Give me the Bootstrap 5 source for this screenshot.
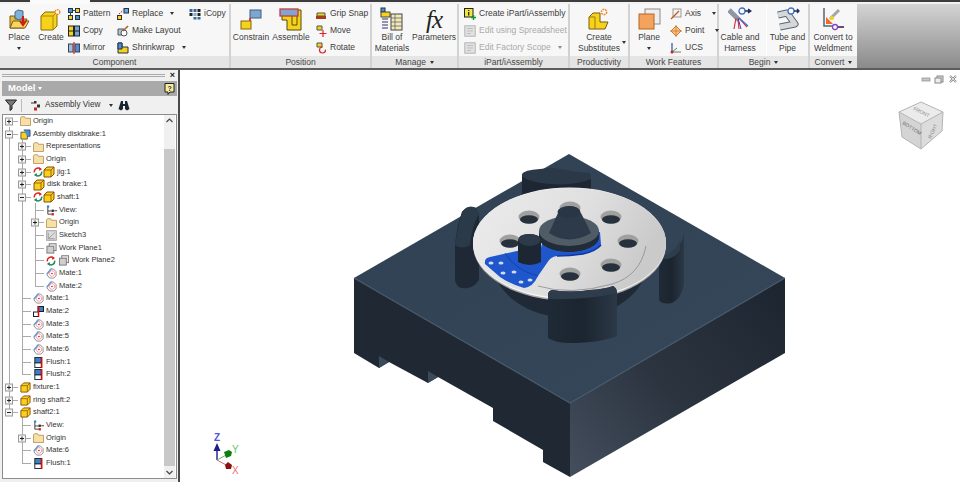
<!DOCTYPE html>
<html lang="en">
<head>
<meta charset="UTF-8">
<title>Assembly diskbrake</title>
<link href="https://cdn.jsdelivr.net/npm/bootstrap@5.3.3/dist/css/bootstrap.min.css" rel="stylesheet">
<style>
  html, body { height: 482px; overflow: hidden; background: #fff; }
  body { font-family: "Liberation Sans", Arial, sans-serif; color: #3c3c3c; width: 960px; }
  svg { display: block; flex: none; }

  /* ribbon */
  .top-strip { height: 4px; background: linear-gradient(#3d3d3d 0, #3d3d3d 2.5px, #f2f2f2 2.5px); }
  .top-tab { width: 60px; margin-left: 30px; height: 4px; background: #fafafa; }
  .rb { height: 66px; border-bottom: 2px solid #5c5c5c; background: linear-gradient(#d4d4d4, #8a8a8a); }
  .rb-panel { border-right: 2px solid #d2d2d2; background: #f7f7f7; flex: none; }
  .rb-body { height: 52px; }
  .rb-title { height: 12px; line-height: 12px; font-size: 8.5px; background: #e5e5e5; color: #444; gap: 4px; }
  .big-btn { padding-top: 3px; font-size: 8.5px; line-height: 11px; flex: none; }
  .big-ico { height: 25px; }
  .sm-col { padding-top: 1px; font-size: 8.5px; flex: none; }
  .sm-row { height: 17px; gap: 3px; white-space: nowrap; }
  .car { width: 0; height: 0; border-left: 2.5px solid transparent; border-right: 2.5px solid transparent; border-top: 3px solid #333; flex: none; }
  .car-float { position: absolute; right: 2px; top: 37px; }
  .dis { color: #aaa; }
  .fx-txt { font-family: "Liberation Serif", serif; font-style: italic; font-size: 25px; line-height: 25px; color: #222; letter-spacing: -1px; }
  .w-231 { width: 231px; } .w-141 { width: 141px; } .w-87 { width: 87px; } .w-111 { width: 111px; }
  .w-60 { width: 60px; } .w-89 { width: 89px; } .w-91 { width: 91px; } .w-47 { width: 47px; }

  /* left browser */
  .main-area { height: 412px; }
  .side { width: 180px; background: #f0f0f0; border-right: 2px solid #4a4a4a; flex: none; padding: 0 1px 0 2px; }
  .grip { height: 11px; gap: 3px; font-size: 9px; line-height: 9px; }
  .grip-lines { height: 3px; border-top: 1px solid #aaa; border-bottom: 1px solid #aaa; flex: 1 1 auto; }
  .grip-x { font-weight: 700; color: #222; width: 9px; text-align: center; }
  .model-head { height: 15px; background: #a9a9a9; color: #fff; font-weight: 700; font-size: 9.5px; padding: 0 2px 0 6px; gap: 3px; }
  .model-head .car { border-top-color: #fff; }
  .tool-row { height: 18px; font-size: 8.2px; color: #333; padding-left: 3px; }
  .tool-sep { width: 1px; height: 13px; background: #bbb; margin: 0 9px 0 4px; }
  .tree { height: 365px; border: 1px solid #8c8c8c; background: #fff; position: relative; }
  .tree-lines { position: absolute; left: 0; top: 0; }
  .tree-rows { position: relative; flex: 1 1 auto; padding-left: 0; }
  .t-row { height: 12.68px; font-size: 7.5px; line-height: 12.68px; white-space: nowrap; color: #333; }
  .lv1 { padding-left: 13px; }
  .lv2 { padding-left: 26px; }
  .t-slot { width: 17px; flex: none; }
  .t-ico { margin-right: 2px; }
  .sbar { width: 11px; background: #f0f0f0; flex: none; margin-right: 1px; }
  .sbar-arrow { height: 12px; font-size: 7px; color: #444; }
  .sbar-gap { height: 22px; }
  .sbar-thumb { height: 318px; background: #c8c8c8; }

  /* graphics window */
  .canvas { position: relative; flex: 1 1 auto; background: #fff; overflow: hidden; }
  .canvas > svg { width: 780px; height: 412px; }
</style>
</head>
<body>

<svg width="0" height="0" style="position:absolute">
  <defs>
    <symbol id="folder" viewBox="0 0 12 11"><path d="M.5 2.5V10.5H11.5V2.5H6L5 .8H1.5L.5 2z" fill="#f6dfa8" stroke="#a8843c" stroke-width=".8"/></symbol>
    <symbol id="cube" viewBox="0 0 12 12"><path d="M1 4 4 1H11V8L8 11H1z" fill="#f7d21c" stroke="#8a4a08"/><path d="M1 4H8V11M8 4 11 1" fill="none" stroke="#8a4a08" stroke-width=".8"/></symbol>
    <symbol id="mate" viewBox="0 0 12 12"><path d="M1 7.5 4 11H8.5L11 8.5V4L8 1H5z" fill="#fff" stroke="#556" stroke-width=".7"/><path d="M.8 6.5 6 .8" stroke="#5aa0dc" stroke-width="1.4"/><circle cx="6.5" cy="6" r="3" fill="none" stroke="#e33" stroke-width=".8" stroke-dasharray="1.2 .8"/><circle cx="6.5" cy="6" r=".9" fill="#e00"/></symbol>
    <symbol id="flush" viewBox="0 0 12 12"><rect x="2" y=".5" width="7" height="6" fill="#3b7fc4" stroke="#123"/><rect x="2" y="6.5" width="7" height="5" fill="#fff" stroke="#123"/><path d="M9.5 0V12" stroke="#e00" stroke-width="1.6"/></symbol>
    <symbol id="sync" viewBox="0 0 11 11"><path d="M1.5 6A4 4 0 0 1 8 2.2" fill="none" stroke="#e02222" stroke-width="1.6"/><path d="M6.5 .3 10 2.2 7 4.5z" fill="#e02222"/><path d="M9.5 5A4 4 0 0 1 3 8.8" fill="none" stroke="#1f8a5a" stroke-width="1.6"/><path d="M4.5 10.7 1 8.8 4 6.5z" fill="#1f8a5a"/></symbol>
    <symbol id="plus" viewBox="0 0 17 9"><path d="M9.5 4.5H15" stroke="#aaa"/><rect x="2.5" y="1" width="7" height="7" fill="#f4f4f4" stroke="#999"/><path d="M4 4.5H8M6 2.5V6.5" stroke="#222"/></symbol>
    <symbol id="minus" viewBox="0 0 17 9"><path d="M9.5 4.5H15" stroke="#aaa"/><rect x="2.5" y="1" width="7" height="7" fill="#f4f4f4" stroke="#999"/><path d="M4 4.5H8" stroke="#222"/></symbol>
    <symbol id="dash" viewBox="0 0 17 9"><path d="M6 4.5H15" stroke="#aaa"/></symbol>
    <symbol id="view" viewBox="0 0 12 12"><rect x="1" y=".5" width="2.5" height="2.5" fill="#3b7fc4"/><path d="M2 3V10H6M2 6.5H6" stroke="#333" fill="none"/><rect x="6" y="5" width="2.6" height="2.6" fill="#333"/><rect x="6" y="8.8" width="2.6" height="2.6" fill="#c22"/><path d="M9 6.3H12" stroke="#333"/></symbol>
    <symbol id="wplane" viewBox="0 0 12 12"><rect x="3.5" y=".8" width="7.5" height="7.5" fill="#e8e8e8" stroke="#777"/><rect x="1" y="3.5" width="7.5" height="7.5" fill="#cfcfcf" stroke="#777"/></symbol>
    <symbol id="sketch" viewBox="0 0 12 12"><rect x=".8" y=".8" width="10.4" height="10.4" fill="#ddd" stroke="#999"/><path d="M2.5 9.5 9.5 3M2.5 3V9.5H9.5" fill="none" stroke="#999"/></symbol>
    <symbol id="ybox" viewBox="0 0 12 12"><path d="M1 3.5H8V11H1z" fill="#f7d21c" stroke="#333" stroke-width=".8"/><path d="M4 1H11V8H8" fill="#4f8fd0" stroke="#1b3a66" stroke-width=".8"/></symbol>
    <symbol id="grayico" viewBox="0 0 12 12"><rect x=".8" y=".8" width="10.4" height="10.4" fill="#e2e2e2" stroke="#b5b5b5"/><path d="M3 3.5H9M3 6H9M3 8.5H7" stroke="#bdbdbd"/></symbol>
  </defs>
</svg>

<div class="top-strip"><div class="top-tab"></div></div>

<!-- ribbon -->
<div class="rb d-flex">
  <div class="rb-panel w-231">
    <div class="rb-body d-flex">
      <div class="big-btn d-flex flex-column align-items-center" style="width:38px">
        <div class="big-ico"><svg width="24" height="24" viewBox="0 0 24 24"><path d="M3 21V9H8V12H20L17 21z" fill="#e7bb3d" stroke="#7a5a14"/><path d="M3 21 6 14H22L18 21z" fill="#f6d662" stroke="#7a5a14"/><path d="M8 5 11 3 16 4V11L12 13 8 11z" fill="#7fb2d8" stroke="#3e6c92"/><path d="M16 9V16M13 14 16 18 19 14" fill="none" stroke="#d01818" stroke-width="2"/></svg></div>
        <span>Place</span><span class="car mt-1"></span>
      </div>
      <div class="big-btn d-flex flex-column align-items-center" style="width:26px">
        <div class="big-ico"><svg width="24" height="24" viewBox="0 0 24 24"><path d="M2 9 6 5H18V19L14 23H2z" fill="#f6d21a" stroke="#8a6a08"/><path d="M2 9H14V23" fill="none" stroke="#a88a10"/><path d="M14 9 18 5" stroke="#a88a10"/><circle cx="18.5" cy="5" r="2.3" fill="#fff" stroke="#ef8a2c" stroke-width="1.5" stroke-dasharray="1.6 .7"/></svg></div>
        <span>Create</span>
      </div>
      <div class="sm-col ms-1" style="width:49px">
        <div class="sm-row d-flex align-items-center"><svg width="12" height="12" viewBox="0 0 12 12"><rect x=".5" y=".5" width="4" height="4" fill="#4f8fd0" stroke="#234"/><rect x="7.5" y=".5" width="4" height="4" fill="#f6d21a" stroke="#234"/><rect x=".5" y="7.5" width="4" height="4" fill="#f6d21a" stroke="#234"/><rect x="7.5" y="7.5" width="4" height="4" fill="#4f8fd0" stroke="#234"/><path d="M4.5 2.500H7.500M2.500 4.500V7.500" stroke="#345"/></svg>Pattern</div>
        <div class="sm-row d-flex align-items-center"><svg width="12" height="12" viewBox="0 0 12 12"><rect x=".5" y="1" width="5" height="10" fill="#f6d21a" stroke="#222"/><rect x="6.500" y="1" width="5" height="10" fill="#6ea5dc" stroke="#222"/><path d="M1 6H5M7 6H11" stroke="#222"/></svg>Copy</div>
        <div class="sm-row d-flex align-items-center"><svg width="12" height="12" viewBox="0 0 12 12"><rect x=".5" y="2" width="4.500" height="8" fill="#9bbfe0" stroke="#345"/><rect x="7" y="2" width="4.500" height="8" fill="#4f8fd0" stroke="#345"/><path d="M6 0V12" stroke="#d81818" stroke-width="1.200"/></svg>Mirror</div>
      </div>
      <div class="sm-col" style="width:72px">
        <div class="sm-row d-flex align-items-center"><svg width="12" height="12" viewBox="0 0 12 12"><rect x=".5" y="7.500" width="4" height="4" fill="#f6d21a" stroke="#333"/><rect x="7" y=".5" width="4.500" height="4.500" fill="#6ea5dc" stroke="#234"/><path d="M2 6 6.500 2" stroke="#d81818" stroke-dasharray="1.500 1"/></svg>Replace <span class="car ms-1"></span></div>
        <div class="sm-row d-flex align-items-center"><svg width="12" height="12" viewBox="0 0 12 12"><path d="M1 4H7V10H1z" fill="#b9c4cc" stroke="#456"/><circle cx="7" cy="8" r="3" fill="#fff" stroke="#555"/><path d="M6 6 11 1" stroke="#a8682a" stroke-width="1.600"/></svg>Make Layout</div>
        <div class="sm-row d-flex align-items-center"><svg width="12" height="12" viewBox="0 0 12 12"><path d="M1 1H5V5H11V11H1z" fill="#f6d21a" stroke="#234"/><path d="M1 1H5V7H1z" fill="#4f8fd0" stroke="#234"/></svg>Shrinkwrap <span class="car ms-1"></span></div>
      </div>
      <div class="sm-col">
        <div class="sm-row d-flex align-items-center"><svg width="12" height="12" viewBox="0 0 12 12"><rect x=".5" y="1" width="3" height="3" fill="#37699c"/><rect x="4.500" y="1" width="3" height="3" fill="#37699c"/><rect x="8.500" y="1" width="3" height="3" fill="#222"/><rect x=".5" y="5" width="3" height="3" fill="#222"/><rect x="4.500" y="5" width="3" height="3" fill="#88aacc"/><rect x="8.500" y="5" width="3" height="3" fill="#222"/><rect x="4.500" y="9" width="3" height="2.500" fill="#37699c"/><rect x="8.500" y="9" width="3" height="2.500" fill="#37699c"/></svg>iCopy</div>
      </div>
    </div>
    <div class="rb-title d-flex justify-content-center">Component</div>
  </div>

  <div class="rb-panel w-141">
    <div class="rb-body d-flex">
      <div class="big-btn d-flex flex-column align-items-center" style="width:40px">
        <div class="big-ico"><svg width="24" height="24" viewBox="0 0 24 24"><rect x="11" y="3" width="11" height="8" fill="#7da7d0" stroke="#3e5f80"/><rect x="2" y="14" width="10" height="8" fill="#f6d21a" stroke="#7a6a10"/><path d="M11 11V14" stroke="#e33" stroke-width="2"/></svg></div>
        <span>Constrain</span>
      </div>
      <div class="big-btn d-flex flex-column align-items-center" style="width:40px">
        <div class="big-ico"><svg width="24" height="24" viewBox="0 0 24 24"><path d="M3 3H22V23H8V13H3z" fill="#f6d21a" stroke="#554a08"/><path d="M13 8H18V18H13z" fill="#f6d21a" stroke="#554a08"/><rect x="1" y="2" width="18" height="7" fill="#7da7d0" stroke="#cc3a3a" stroke-width="1.300"/></svg></div>
        <span>Assemble</span>
      </div>
      <div class="sm-col ms-1">
        <div class="sm-row d-flex align-items-center"><svg width="12" height="12" viewBox="0 0 12 12"><path d="M2 5H10V8H2z" fill="#f6d21a" stroke="#555"/><path d="M1 8H11V11H1z" fill="#a04020"/></svg>Grip Snap</div>
        <div class="sm-row d-flex align-items-center"><svg width="12" height="12" viewBox="0 0 12 12"><path d="M2 1H7V5H2z" fill="#f6d21a" stroke="#555"/><path d="M8 5V12M4.500 8.500H11.500" stroke="#e02222" stroke-width="1.200"/></svg>Move</div>
        <div class="sm-row d-flex align-items-center"><svg width="12" height="12" viewBox="0 0 12 12"><path d="M2 1H7V5H2z" fill="#f6d21a" stroke="#555"/><circle cx="7.500" cy="8" r="3" fill="none" stroke="#e02222" stroke-width="1.200" stroke-dasharray="14 4"/></svg>Rotate</div>
      </div>
    </div>
    <div class="rb-title d-flex justify-content-center">Position</div>
  </div>

  <div class="rb-panel w-87">
    <div class="rb-body d-flex">
      <div class="big-btn d-flex flex-column align-items-center" style="width:40px">
        <div class="big-ico"><svg width="24" height="24" viewBox="0 0 24 24"><rect x="1" y="1" width="4" height="4" fill="#4f8fd0" stroke="#234"/><rect x="1" y="5" width="9" height="5" fill="#f6d21a" stroke="#444"/><rect x="11" y="7" width="11" height="16" fill="#f3e8b8" stroke="#444"/><path d="M11 11H22M11 15H22M11 19H22M15 7V23" stroke="#666" stroke-width=".8"/><path d="M2 12H8M2 15H8M2 18H8M2 21H8" stroke="#336" stroke-width="1.200"/></svg></div>
        <span>Bill of</span><span>Materials</span>
      </div>
      <div class="big-btn d-flex flex-column align-items-center" style="width:44px">
        <div class="big-ico fx-txt">fx</div>
        <span>Parameters</span>
      </div>
    </div>
    <div class="rb-title d-flex justify-content-center align-items-center">Manage <span class="car"></span></div>
  </div>

  <div class="rb-panel w-111">
    <div class="rb-body d-flex">
      <div class="sm-col" style="margin-left:5px">
        <div class="sm-row d-flex align-items-center"><svg width="12" height="12" viewBox="0 0 12 12"><rect x=".5" y=".5" width="8.500" height="8.500" fill="#f0e63c" stroke="#222"/><path d="M4.700 2V3M4.700 4V7.500" stroke="#222" stroke-width="1.300"/><path d="M9.500 7V12M7 9.500H12" stroke="#129a2c" stroke-width="1.500"/></svg>Create iPart/iAssembly</div>
        <div class="sm-row d-flex align-items-center dis"><svg width="12" height="12"><use href="#grayico"/></svg>Edit using Spreadsheet</div>
        <div class="sm-row d-flex align-items-center dis"><svg width="12" height="12"><use href="#grayico"/></svg>Edit Factory Scope <span class="car ms-1" style="border-top-color:#888"></span></div>
      </div>
    </div>
    <div class="rb-title d-flex justify-content-center">iPart/iAssembly</div>
  </div>

  <div class="rb-panel w-60">
    <div class="rb-body d-flex">
      <div class="big-btn d-flex flex-column align-items-center position-relative" style="width:58px">
        <div class="big-ico"><svg width="24" height="24" viewBox="0 0 24 24"><path d="M2 10 6 6H13V15H21L18 22H2z" fill="#f6d21a" stroke="#7a5a14"/><path d="M2 10H8V22" fill="none" stroke="#9a7a18"/><circle cx="17" cy="5" r="2.600" fill="#fff" stroke="#ef8a2c" stroke-width="1.600" stroke-dasharray="1.800 .8"/></svg></div>
        <span>Create</span><span>Substitutes</span>
        <span class="car car-float"></span>
      </div>
    </div>
    <div class="rb-title d-flex justify-content-center">Productivity</div>
  </div>

  <div class="rb-panel w-89">
    <div class="rb-body d-flex">
      <div class="big-btn d-flex flex-column align-items-center" style="width:38px">
        <div class="big-ico"><svg width="24" height="24" viewBox="0 0 24 24"><rect x="8" y="2" width="15" height="15" fill="#eee" stroke="#8c8c8c"/><rect x="2" y="7" width="15" height="15" fill="#f4a35c" stroke="#b8651e"/></svg></div>
        <span>Plane</span><span class="car mt-1"></span>
      </div>
      <div class="sm-col" style="margin-left:2px">
        <div class="sm-row d-flex align-items-center"><svg width="12" height="12" viewBox="0 0 12 12"><rect x="3" y="1" width="8" height="8" fill="#f3f3f3" stroke="#999"/><path d="M1 11 9 3" stroke="#c8541e" stroke-width="1.300"/></svg>Axis <span class="car ms-2"></span></div>
        <div class="sm-row d-flex align-items-center"><svg width="12" height="12" viewBox="0 0 12 12"><path d="M6 1 11 6 6 11 1 6z" fill="#f6c48a" stroke="#d07a2a"/><path d="M0 6H12M6 0V12" stroke="#d07a2a" stroke-width=".8"/></svg>Point <span class="car ms-2"></span></div>
        <div class="sm-row d-flex align-items-center"><svg width="12" height="12" viewBox="0 0 12 12"><path d="M2 10V1" stroke="#2850b0" stroke-width="1.200"/><path d="M2 10H11" stroke="#777" stroke-width="1"/><path d="M2 10 7 6" stroke="#3a9a4a"/><circle cx="2" cy="10" r="1.500" fill="#e01818"/></svg>UCS</div>
      </div>
    </div>
    <div class="rb-title d-flex justify-content-center">Work Features</div>
  </div>

  <div class="rb-panel w-91">
    <div class="rb-body d-flex">
      <div class="big-btn d-flex flex-column align-items-center" style="width:42px">
        <div class="big-ico"><svg width="24" height="24" viewBox="0 0 24 24"><path d="M1 3 11 13" stroke="#8c98a4" stroke-width="5"/><path d="M8 11 6 22M10 12 11 22M12 12 19 20" fill="none" stroke="#d0344a" stroke-width="1.200"/><path d="M10 11 13 22" stroke="#6030a0"/><path d="M11 11 20 19" stroke="#2a78c8" stroke-width="1.200"/><circle cx="14" cy="4" r="3" fill="#fff" stroke="#4070c0" stroke-width="1.300"/><path d="M17 4H23M20 2 23 4 20 6" stroke="#1c2f60" stroke-width="1.300" fill="#1c2f60"/></svg></div>
        <span>Cable and</span><span>Harness</span>
      </div>
      <div class="big-btn d-flex flex-column align-items-center" style="width:42px;margin-left:5px;border-left:1px solid #fff">
        <div class="big-ico"><svg width="24" height="24" viewBox="0 0 24 24"><path d="M2 8 11 6 19 17 4 20" fill="none" stroke="#5a6670" stroke-width="7" stroke-linejoin="round"/><path d="M2 8 11 6 19 17 4 20" fill="none" stroke="#d4d8da" stroke-width="5" stroke-linejoin="round"/><circle cx="15" cy="4" r="3" fill="#fff" stroke="#4070c0" stroke-width="1.300"/><path d="M18 4H23M21 2 23 4 21 6" stroke="#1c2f60" stroke-width="1.300" fill="#1c2f60"/></svg></div>
        <span>Tube and</span><span>Pipe</span>
      </div>
    </div>
    <div class="rb-title d-flex justify-content-center align-items-center">Begin <span class="car"></span></div>
  </div>

  <div class="rb-panel w-47" style="border-right:0">
    <div class="rb-body d-flex">
      <div class="big-btn d-flex flex-column align-items-center" style="width:46px">
        <div class="big-ico"><svg width="24" height="24" viewBox="0 0 24 24"><path d="M3 1V19H14" fill="none" stroke="#5a6670" stroke-width="1.500"/><path d="M5 17V10L12 17z" fill="#ef6a2c"/><path d="M9 12 18 3" stroke="#a5a5a5" stroke-width="3"/><circle cx="11" cy="11" r="2" fill="#f6d21a"/><circle cx="14" cy="20" r="2.500" fill="#fff" stroke="#8048c0" stroke-width="1.300"/><path d="M17 20H23" stroke="#3c2060" stroke-width="1.600"/></svg></div>
        <span>Convert to</span><span>Weldment</span>
      </div>
    </div>
    <div class="rb-title d-flex justify-content-center align-items-center">Convert <span class="car"></span></div>
  </div>
</div>

<div class="main-area d-flex">
  <!-- model browser -->
  <div class="side d-flex flex-column">
    <div class="grip d-flex align-items-center"><div class="grip-lines"></div><span class="grip-x">×</span></div>
    <div class="model-head d-flex align-items-center">Model <span class="car"></span>
      <svg class="ms-auto" width="11" height="12" viewBox="0 0 11 12"><path d="M1 .5H10V9H6L4 11.500V9H1z" fill="#f7ef9a" stroke="#222"/><text x="3.500" y="7.500" font-size="7" font-weight="700" font-family="Liberation Sans" fill="#234">?</text></svg>
    </div>
    <div class="tool-row d-flex align-items-center">
      <svg width="12" height="12" viewBox="0 0 12 12"><path d="M.5 1H11.500L7 6.500V10L5 11.500V6.500z" fill="#777" stroke="#222"/></svg>
      <span class="tool-sep"></span>
      <svg style="margin-right:3px" width="11" height="11" viewBox="0 0 11 11"><path d="M0 3H3" stroke="#333"/><rect x="3" y="1" width="2.500" height="2.500" fill="#333"/><rect x="6" y="4.500" width="3" height="3" fill="#333"/><rect x="3" y="7.500" width="3" height="3" fill="#c22"/></svg>
      <span>Assembly View</span>
      <span class="car" style="margin:0 5px 0 9px"></span>
      <svg width="12" height="11" viewBox="0 0 12 11"><path d="M3 1H5V4H7V1H9L11.500 9 9 10.500 7 9V6H5V9L3 10.500.5 9z" fill="#1c2430"/></svg>
    </div>
    <div class="tree d-flex">
      <svg class="tree-lines" width="60" height="363" viewBox="0 0 60 363">
        <path d="M6.500 12V298M19.500 25V260M32.500 88V172M19.500 298V349" stroke="#aaa" fill="none"/>
      </svg>
      <div class="tree-rows">
        <div class="t-row d-flex align-items-center"><svg class="t-slot" width="17" height="9"><use href="#plus"/></svg><svg class="t-ico" width="11" height="10"><use href="#folder"/></svg>Origin</div>
        <div class="t-row d-flex align-items-center"><svg class="t-slot" width="17" height="9"><use href="#minus"/></svg><svg class="t-ico" width="11" height="11"><use href="#ybox"/></svg>Assembly diskbrake:1</div>
        <div class="t-row d-flex align-items-center lv1"><svg class="t-slot" width="17" height="9"><use href="#plus"/></svg><svg class="t-ico" width="11" height="10"><use href="#folder"/></svg>Representations</div>
        <div class="t-row d-flex align-items-center lv1"><svg class="t-slot" width="17" height="9"><use href="#plus"/></svg><svg class="t-ico" width="11" height="10"><use href="#folder"/></svg>Origin</div>
        <div class="t-row d-flex align-items-center lv1"><svg class="t-slot" width="17" height="9"><use href="#plus"/></svg><svg class="me-0" width="10" height="10"><use href="#sync"/></svg><svg class="t-ico" width="12" height="12"><use href="#cube"/></svg>jig:1</div>
        <div class="t-row d-flex align-items-center lv1"><svg class="t-slot" width="17" height="9"><use href="#plus"/></svg><svg class="t-ico" width="12" height="12"><use href="#cube"/></svg>disk brake:1</div>
        <div class="t-row d-flex align-items-center lv1"><svg class="t-slot" width="17" height="9"><use href="#minus"/></svg><svg class="me-0" width="10" height="10"><use href="#sync"/></svg><svg class="t-ico" width="12" height="12"><use href="#cube"/></svg>shaft:1</div>
        <div class="t-row d-flex align-items-center lv2"><svg class="t-slot" width="17" height="9"><use href="#dash"/></svg><svg class="t-ico" width="11" height="11"><use href="#view"/></svg>View:</div>
        <div class="t-row d-flex align-items-center lv2"><svg class="t-slot" width="17" height="9"><use href="#plus"/></svg><svg class="t-ico" width="11" height="10"><use href="#folder"/></svg>Origin</div>
        <div class="t-row d-flex align-items-center lv2"><svg class="t-slot" width="17" height="9"><use href="#dash"/></svg><svg class="t-ico" width="11" height="11"><use href="#sketch"/></svg>Sketch3</div>
        <div class="t-row d-flex align-items-center lv2"><svg class="t-slot" width="17" height="9"><use href="#dash"/></svg><svg class="t-ico" width="11" height="11"><use href="#wplane"/></svg>Work Plane1</div>
        <div class="t-row d-flex align-items-center lv2"><svg class="t-slot" width="17" height="9"><use href="#dash"/></svg><svg class="me-0" width="10" height="10"><use href="#sync"/></svg><svg class="t-ico" width="12" height="11" style="margin-left:2px"><use href="#wplane"/></svg>Work Plane2</div>
        <div class="t-row d-flex align-items-center lv2"><svg class="t-slot" width="17" height="9"><use href="#dash"/></svg><svg class="t-ico" width="11" height="11"><use href="#mate"/></svg>Mate:1</div>
        <div class="t-row d-flex align-items-center lv2"><svg class="t-slot" width="17" height="9"><use href="#dash"/></svg><svg class="t-ico" width="11" height="11"><use href="#mate"/></svg>Mate:2</div>
        <div class="t-row d-flex align-items-center lv1"><svg class="t-slot" width="17" height="9"><use href="#dash"/></svg><svg class="t-ico" width="11" height="11"><use href="#mate"/></svg>Mate:1</div>
        <div class="t-row d-flex align-items-center lv1"><svg class="t-slot" width="17" height="9"><use href="#dash"/></svg><svg class="t-ico" width="11" height="11" viewBox="0 0 11 11"><rect x="5" y=".5" width="5.500" height="5" fill="#3b7fc4" stroke="#123"/><rect x=".5" y="6" width="5" height="4.500" fill="#fff" stroke="#123"/><path d="M5.500 0V11" stroke="#e00" stroke-width="1.500"/></svg>Mate:2</div>
        <div class="t-row d-flex align-items-center lv1"><svg class="t-slot" width="17" height="9"><use href="#dash"/></svg><svg class="t-ico" width="11" height="11"><use href="#mate"/></svg>Mate:3</div>
        <div class="t-row d-flex align-items-center lv1"><svg class="t-slot" width="17" height="9"><use href="#dash"/></svg><svg class="t-ico" width="11" height="11"><use href="#mate"/></svg>Mate:5</div>
        <div class="t-row d-flex align-items-center lv1"><svg class="t-slot" width="17" height="9"><use href="#dash"/></svg><svg class="t-ico" width="11" height="11"><use href="#mate"/></svg>Mate:6</div>
        <div class="t-row d-flex align-items-center lv1"><svg class="t-slot" width="17" height="9"><use href="#dash"/></svg><svg class="t-ico" width="11" height="11"><use href="#flush"/></svg>Flush:1</div>
        <div class="t-row d-flex align-items-center lv1"><svg class="t-slot" width="17" height="9"><use href="#dash"/></svg><svg class="t-ico" width="11" height="11"><use href="#flush"/></svg>Flush:2</div>
        <div class="t-row d-flex align-items-center"><svg class="t-slot" width="17" height="9"><use href="#plus"/></svg><svg class="t-ico" width="11" height="11"><use href="#cube"/></svg>fixture:1</div>
        <div class="t-row d-flex align-items-center"><svg class="t-slot" width="17" height="9"><use href="#plus"/></svg><svg class="t-ico" width="11" height="11"><use href="#cube"/></svg>ring shaft:2</div>
        <div class="t-row d-flex align-items-center"><svg class="t-slot" width="17" height="9"><use href="#minus"/></svg><svg class="t-ico" width="11" height="11"><use href="#cube"/></svg>shaft2:1</div>
        <div class="t-row d-flex align-items-center lv1"><svg class="t-slot" width="17" height="9"><use href="#dash"/></svg><svg class="t-ico" width="11" height="11"><use href="#view"/></svg>View:</div>
        <div class="t-row d-flex align-items-center lv1"><svg class="t-slot" width="17" height="9"><use href="#plus"/></svg><svg class="t-ico" width="11" height="10"><use href="#folder"/></svg>Origin</div>
        <div class="t-row d-flex align-items-center lv1"><svg class="t-slot" width="17" height="9"><use href="#dash"/></svg><svg class="t-ico" width="11" height="11"><use href="#mate"/></svg>Mate:6</div>
        <div class="t-row d-flex align-items-center lv1"><svg class="t-slot" width="17" height="9"><use href="#dash"/></svg><svg class="t-ico" width="11" height="11"><use href="#flush"/></svg>Flush:1</div>
      </div>
      <div class="sbar d-flex flex-column">
        <div class="sbar-arrow d-flex align-items-center justify-content-center"><svg width="7" height="5" viewBox="0 0 7 5"><path d="M.5 4 3.500 1 6.500 4" fill="none" stroke="#444" stroke-width="1.200"/></svg></div>
        <div class="sbar-gap"></div>
        <div class="sbar-thumb"></div>
        <div class="flex-grow-1"></div>
        <div class="sbar-arrow d-flex align-items-center justify-content-center"><svg width="7" height="5" viewBox="0 0 7 5"><path d="M.5 1 3.500 4 6.500 1" fill="none" stroke="#444" stroke-width="1.200"/></svg></div>
      </div>
    </div>
  </div>

  <!-- graphics window, coordinates are page pixels -->
  <div class="canvas">
    <svg viewBox="180 70 780 412">
      <defs>
        <linearGradient id="gTop" x1="0" y1="0" x2="1" y2="1"><stop offset="0" stop-color="#2f4152"/><stop offset="1" stop-color="#354759"/></linearGradient>
        <linearGradient id="gRight" x1="570" y1="470" x2="785" y2="290" gradientUnits="userSpaceOnUse"><stop offset="0" stop-color="#434d5c"/><stop offset=".45" stop-color="#2c3440"/><stop offset="1" stop-color="#1d2630"/></linearGradient>
        <linearGradient id="gDisc" x1="0" y1="0" x2="1" y2=".3"><stop offset="0" stop-color="#ececec"/><stop offset=".6" stop-color="#dfdfdf"/><stop offset="1" stop-color="#cacaca"/></linearGradient>
        <linearGradient id="gPost" x1="0" y1="0" x2="1" y2="0"><stop offset="0" stop-color="#1e2a36"/><stop offset=".5" stop-color="#1b2530"/><stop offset="1" stop-color="#2b3846"/></linearGradient>
      </defs>

      <!-- block -->
      <path d="M354 278 570 403V477L543 462V450L493 421V408L438 377 428 383 389 362 379 368 354 353z" fill="#1f2833"/>
      <path d="M379 356 389 362 379 368zM428 371 438 377 428 383z" fill="#3b4a59"/>
      <path d="M570 403 785 278V353L570 477z" fill="url(#gRight)"/>
      <path d="M354 278 569 154 785 278 570 403z" fill="url(#gTop)"/>
      <path d="M354 278 570 403 785 278" fill="none" stroke="#46586a" stroke-width="1.200"/>

      <!-- back and side posts -->
      <path d="M522 190V174Q524 170 540 169 555 167 560 169 575 172 590 173 590 174 591 178V196z" fill="#2a3847"/>
      <path d="M522 176Q528 182 550 184 575 186 591 179V196H522z" fill="#1d2733"/>
      <path d="M455 245Q457 225 462 212 468 204 476 208L479 214V280Q472 290 462 288 456 287 455 280z" fill="#1e2935"/>
      <path d="M455 245Q458 226 462 212 468 204 476 208L479 214Q472 225 470 245Q462 250 455 245z" fill="#2b3a49"/>
      <path d="M659 258Q672 258 678 248 683 240 684 233V284Q682 298 672 303 662 305 659 300z" fill="url(#gPost)"/>
      <path d="M659 258Q672 262 680 250V240Q676 252 659 258z" fill="#2e3d4c"/>

      <!-- disc -->
      <ellipse cx="570" cy="262" rx="77" ry="56" fill="#1f2a36"/>
      <ellipse cx="569.500" cy="245" rx="96.500" ry="56" fill="#a8a8a8"/>
      <ellipse cx="569.500" cy="243.500" rx="96.500" ry="56" fill="#f6f6f6"/>
      <ellipse cx="569.500" cy="243" rx="96.500" ry="55" fill="url(#gDisc)"/>
      <path d="M538 286Q570 296 612 284 640 276 646 246" fill="none" stroke="#8c8c8c" stroke-width=".8"/>
      <g>
        <ellipse cx="529" cy="217" rx="10.500" ry="6.500" fill="#a0a0a0"/><ellipse cx="529" cy="219.500" rx="9" ry="4.200" fill="#27313d"/>
        <ellipse cx="570" cy="208" rx="10.500" ry="6.500" fill="#a0a0a0"/><ellipse cx="570" cy="210.500" rx="9" ry="4.200" fill="#27313d"/>
        <ellipse cx="611" cy="217" rx="10.500" ry="6.500" fill="#a0a0a0"/><ellipse cx="611" cy="219.500" rx="9" ry="4.200" fill="#27313d"/>
        <ellipse cx="628" cy="241" rx="10.500" ry="6.500" fill="#a0a0a0"/><ellipse cx="628" cy="243.500" rx="9" ry="4.200" fill="#27313d"/>
        <ellipse cx="611" cy="265" rx="10.500" ry="6.500" fill="#a0a0a0"/><ellipse cx="611" cy="267.500" rx="9" ry="4.200" fill="#27313d"/>
        <ellipse cx="570" cy="274" rx="10.500" ry="6.500" fill="#a0a0a0"/><ellipse cx="570" cy="276.500" rx="9" ry="4.200" fill="#27313d"/>
        <ellipse cx="510" cy="241" rx="10.500" ry="6.500" fill="#a0a0a0"/><ellipse cx="510" cy="243.500" rx="9" ry="4.200" fill="#27313d"/>
      </g>

      <!-- blue arm -->
      <path d="M600 232 601 245Q596 251 583 254 570 256 557 256 550 257 547 263L538 276Q533 287 524 288 510 284 500 277L485 264Q484 258 490 257L517 251 541 248 543 238z" fill="#1f56cc"/>
      <path d="M601 245Q596 251 583 254 570 256 557 256" fill="none" stroke="#12379a" stroke-width="1.500"/>
      <path d="M505 253Q515 270 538 276" fill="none" stroke="#0f3aa0" stroke-width=".7"/>
      <g fill="#cfdcf5"><ellipse cx="491" cy="263" rx="2.500" ry="1.500"/><ellipse cx="501" cy="263" rx="2.500" ry="1.500"/><ellipse cx="503" cy="273" rx="2.500" ry="1.500"/><ellipse cx="514" cy="272" rx="2.500" ry="1.500"/><ellipse cx="521" cy="282" rx="2.500" ry="1.500"/><ellipse cx="530" cy="280" rx="2.500" ry="1.500"/></g>

      <!-- hub -->
      <ellipse cx="569" cy="237" rx="30" ry="15" fill="#212c38"/>
      <path d="M539 231V237A30 15 0 0 0 599 237V231z" fill="#212c38"/>
      <ellipse cx="569" cy="231" rx="30" ry="15" fill="#4f5b65"/>
      <path d="M549 233 558 213Q569 204 581 213L591 233Q569 246 549 233z" fill="#2c3a49"/>
      <ellipse cx="569" cy="212" rx="11.500" ry="6" fill="#293645"/>

      <!-- pin -->
      <path d="M518 241Q518 234 529 234 541 234 541 241V262Q530 268 518 262z" fill="#1c2733"/>
      <ellipse cx="529.500" cy="240" rx="11" ry="6" fill="#2c3a49"/>

      <!-- front post -->
      <path d="M548 295Q548 291 552 290 570 293 590 290 605 289 613 286 617 288 617 293V336Q600 343 570 343 555 343 548 338z" fill="url(#gPost)"/>
      <path d="M548 295Q548 291 552 290 570 293 590 290 605 289 613 286 617 288 617 293 590 300 548 299z" fill="#2e3c4b"/>

      <!-- triad -->
      <path d="M217 460V450" stroke="#2a2a9a" stroke-width="1.500"/>
      <path d="M213.500 451 217 443 220.500 451z" fill="#1c1c8c"/>
      <path d="M217 460 228 454" stroke="#6ab06a"/>
      <path d="M217 460 228 466" stroke="#d06a6a"/>
      <path d="M224 452 229 450 232 452 231 456 226 458z" fill="#0e7d0e"/>
      <path d="M225 465 228 462 232 465 231 469 226 469z" fill="#8c1010"/>
      <text x="214" y="441" font-size="10" font-weight="700" font-family="Liberation Sans" fill="#5555dd">Z</text>
      <text x="232" y="453" font-size="10" font-family="Liberation Sans" fill="#5fc95f">Y</text>
      <text x="232" y="474" font-size="10" font-family="Liberation Sans" fill="#ee7070">X</text>

      <!-- window buttons -->
      <rect x="922" y="78" width="8" height="3" fill="#c8c8c8" stroke="#888" stroke-width=".7"/>
      <rect x="937" y="76" width="6" height="6" fill="#ddd" stroke="#888"/><rect x="935" y="78" width="6" height="5" fill="#eee" stroke="#888"/>
      <path d="M950 76 956 82M956 76 950 82" stroke="#888" stroke-width="2"/><path d="M950 76 956 82M956 76 950 82" stroke="#fff" stroke-width=".7"/>

      <!-- view cube -->
      <path d="M921 102 943 112 921 124 899 112z" fill="#ebebeb"/>
      <path d="M921 124 943 112 942 131 921 149z" fill="#dcdcdc"/>
      <path d="M899 112 921 124 921 149 902 137z" fill="#d4d4d4"/>
      <path d="M921 102 943 112 942 131 921 149 902 137 899 112zM899 112 921 124 943 112M921 124V149" fill="none" stroke="#b4b4b4"/>
      <text font-size="5" font-family="Liberation Sans" fill="#8a8a8a" transform="translate(913 110) rotate(25)">FRONT</text>
      <text font-size="5" font-family="Liberation Sans" fill="#6a6a6a" transform="translate(902 124) rotate(32)">BOTTOM</text>
      <text font-size="5" font-family="Liberation Sans" fill="#8a8a8a" transform="translate(931 139) rotate(-65)">RIGHT</text>
    </svg>
  </div>
</div>

<script src="https://cdn.jsdelivr.net/npm/bootstrap@5.3.3/dist/js/bootstrap.bundle.min.js"></script>
</body>
</html>
